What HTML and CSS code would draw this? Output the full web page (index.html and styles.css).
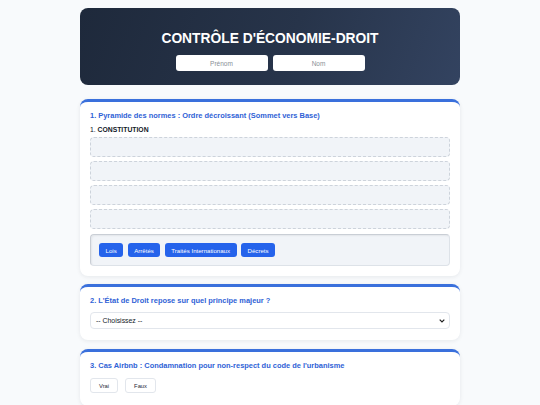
FILE: index.html
```html
<!DOCTYPE html>
<html lang="fr">
<head>
<meta charset="utf-8">
<title>Contrôle d'économie-droit</title>
<link rel="stylesheet" href="styles.css">
</head>
<body>
<div class="container">
  <header class="hero">
    <h1 class="hero-title">CONTRÔLE D'ÉCONOMIE-DROIT</h1>
    <div class="hero-fields">
      <input class="field" type="text" placeholder="Prénom">
      <input class="field" type="text" placeholder="Nom">
    </div>
  </header>

  <section class="card">
    <h2 class="q-title">1. Pyramide des normes : Ordre décroissant (Sommet vers Base)</h2>
    <div class="fixed-item">1. <strong>CONSTITUTION</strong></div>
    <div class="slots">
      <div class="slot"></div>
      <div class="slot"></div>
      <div class="slot"></div>
      <div class="slot"></div>
    </div>
    <div class="bank">
      <span class="chip">Lois</span>
      <span class="chip">Arrêtés</span>
      <span class="chip">Traités Internationaux</span>
      <span class="chip">Décrets</span>
    </div>
  </section>

  <section class="card card-2">
    <h2 class="q-title">2. L'État de Droit repose sur quel principe majeur ?</h2>
    <div class="select">
      <span>-- Choisissez --</span>
      <svg class="chev" width="6" height="4" viewBox="0 0 6 4"><path d="M0.7 0.7 L3 3 L5.3 0.7" fill="none" stroke="#222" stroke-width="1.2"/></svg>
    </div>
  </section>

  <section class="card card-3">
    <h2 class="q-title">3. Cas Airbnb : Condamnation pour non-respect du code de l'urbanisme</h2>
    <div class="choices">
      <button class="choice" type="button">Vrai</button>
      <button class="choice" type="button">Faux</button>
    </div>
  </section>
</div>
</body>
</html>
```

FILE: styles.css
```css
* { box-sizing: border-box; }
body {
  margin: 0;
  background: #f8fafc;
  font-family: "Liberation Sans", Arial, sans-serif;
  color: #1e293b;
}
.container {
  width: 380px;
  margin: 8px auto 0;
}
.hero {
  height: 77px;
  border-radius: 8px;
  background: linear-gradient(110deg, #1e293b 0%, #27344a 55%, #334360 100%);
  padding-top: 22px;
  display: flex;
  flex-direction: column;
  align-items: center;
}
.hero-title {
  margin: 0;
  color: #ffffff;
  font-size: 13.8px;
  line-height: 17px;
  font-weight: bold;
  letter-spacing: 0;
}
.hero-fields {
  margin-top: 8px;
  display: flex;
  gap: 5px;
}
.field {
  width: 92px;
  height: 16px;
  border: none;
  border-radius: 3px;
  background: #ffffff;
  font-family: "Liberation Sans", Arial, sans-serif;
  font-size: 6.5px;
  text-align: center;
  padding: 0;
}
.field::placeholder { color: #8a8f96; }
.card {
  margin-top: 14px;
  background: #ffffff;
  border-top: 3px solid #3a70dc;
  border-radius: 8px;
  box-shadow: 0 1px 4px rgba(15, 23, 42, 0.08);
  padding: 9px 10px 10px;
}
.card-2 { margin-top: 8px; padding-bottom: 11px; }
.card-3 { margin-top: 9px; padding-top: 9px; padding-bottom: 13px; }
.q-title {
  margin: 0;
  color: #2f62d6;
  font-size: 7.45px;
  line-height: 10px;
  font-weight: bold;
}
.fixed-item {
  margin-top: 4px;
  font-size: 6.8px;
  line-height: 9px;
  color: #111827;
}
.fixed-item strong { font-weight: bold; }
.slots {
  margin-top: 3px;
  display: flex;
  flex-direction: column;
  gap: 4px;
}
.slot {
  height: 20px;
  background: #f1f4f8;
  border: 1px dashed #cdd3db;
  border-radius: 4px;
}
.bank {
  margin-top: 5px;
  height: 32px;
  background: #f1f4f8;
  border: 1px solid #dde2e8;
  border-top-color: #c9ced5;
  border-left-color: #c9ced5;
  border-radius: 4px;
  box-shadow: inset 1px 1px 2px rgba(0, 0, 0, 0.06);
  padding: 0 8px;
  display: flex;
  align-items: center;
  gap: 4.5px;
}
.chip {
  height: 14px;
  padding: 0 6.5px;
  background: #2563eb;
  color: #ffffff;
  border-radius: 3px;
  font-size: 6.1px;
  display: flex;
  align-items: center;
}
.select {
  margin-top: 6px;
  height: 17px;
  border: 1px solid #e2e6ec;
  border-radius: 4px;
  background: #ffffff;
  padding: 0 4px 0 5px;
  display: flex;
  align-items: center;
  justify-content: space-between;
  font-size: 6.9px;
  color: #111827;
}
.chev { display: block; }
.choices {
  margin-top: 7px;
  display: flex;
  gap: 7px;
}
.choice {
  height: 15px;
  padding: 0 8px;
  border: 1px solid #e2e6ec;
  border-radius: 3px;
  background: #ffffff;
  font-family: "Liberation Sans", Arial, sans-serif;
  font-size: 5.8px;
  color: #1f2937;
}
```
